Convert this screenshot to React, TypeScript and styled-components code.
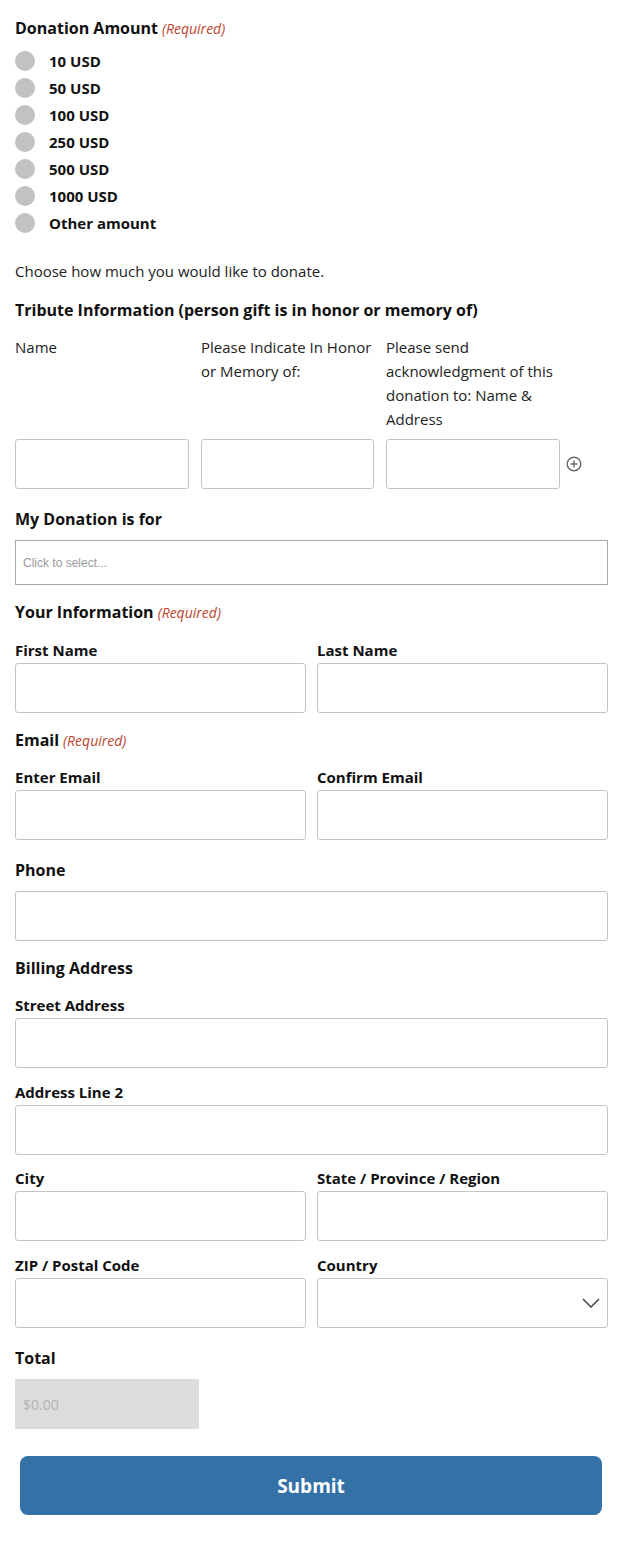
import React from "react";
import styled, { createGlobalStyle } from "styled-components";

const Global = createGlobalStyle`
  * { box-sizing: border-box; }
  body {
    margin: 0;
    background: #fff;
    font-family: "Open Sans", "Noto Sans", sans-serif;
    color: #111;
  }
`;

const Page = styled.form`
  display: flex;
  flex-direction: column;
  padding: 18px 16px 35px 15px;
  width: 624px;
`;

const Heading = styled.div<{ $mt?: number }>`
  margin-top: ${(p) => p.$mt ?? 0}px;
  font-size: 16px;
  font-weight: 700;
  line-height: 20px;
  color: #111;
`;

const Req = styled.span`
  font-size: 14px;
  font-weight: 400;
  font-style: italic;
  color: #b9452f;
  margin-left: 4px;
`;

const RadioList = styled.div`
  margin-top: 8.5px;
  display: flex;
  flex-direction: column;
`;

const RadioRow = styled.label`
  display: flex;
  align-items: center;
  height: 27px;
  gap: 14px;
  font-size: 15px;
  font-weight: 700;
  color: #111;
`;

const RadioDot = styled.span`
  width: 20px;
  height: 20px;
  border-radius: 50%;
  background: #c2c2c2;
  flex: none;
`;

const Help = styled.div<{ $mt?: number }>`
  margin-top: ${(p) => p.$mt ?? 0}px;
  font-size: 15px;
  line-height: 20px;
  color: #222;
`;

const TributeGrid = styled.div`
  margin-top: 15px;
  display: grid;
  grid-template-columns: 174px 173px 174px 1fr;
  column-gap: 12px;
  row-gap: 8px;
  align-items: start;
`;

const TributeLabel = styled.div`
  font-size: 15px;
  line-height: 24px;
  color: #222;
`;

const Input = styled.input`
  display: block;
  width: 100%;
  height: 50px;
  border: 1px solid #c4c4c4;
  border-radius: 3px;
  background: #fff;
  padding: 0 10px;
  font-family: "Open Sans", sans-serif;
  font-size: 14px;
  outline: none;
`;

const AddIcon = styled.div`
  height: 50px;
  display: flex;
  align-items: center;
  margin-left: -6px;
`;

const SelectBox = styled.div`
  margin-top: 11px;
  height: 45px;
  border: 1px solid #a9a9a9;
  display: flex;
  align-items: center;
  padding-left: 7px;
  font-family: "Liberation Sans", Arial, sans-serif;
  font-size: 12px;
  color: #9a9a9a;
`;

const Row = styled.div<{ $mt?: number }>`
  margin-top: ${(p) => p.$mt ?? 0}px;
  display: grid;
  grid-template-columns: 1fr 1fr;
  column-gap: 11px;
`;

const Field = styled.div<{ $mt?: number }>`
  margin-top: ${(p) => p.$mt ?? 0}px;
  display: flex;
  flex-direction: column;
  gap: 3px;
`;

const FieldLabel = styled.label`
  font-size: 15px;
  font-weight: 700;
  line-height: 20px;
  color: #111;
`;

const InputWrap = styled.div<{ $mt?: number }>`
  margin-top: ${(p) => p.$mt ?? 0}px;
  position: relative;
`;

const Chevron = styled.svg`
  position: absolute;
  right: 8px;
  top: 50%;
  transform: translateY(-50%);
`;

const TotalBox = styled.div`
  margin-top: 11px;
  width: 184px;
  height: 50px;
  background: #dcdcdc;
  display: flex;
  align-items: center;
  padding-left: 8px;
  font-size: 14px;
  color: #b3b3b3;
`;

const Submit = styled.button`
  margin: 27px 6px 0 5px;
  height: 59px;
  border: none;
  border-radius: 8px;
  background: #3371a6;
  color: #fff;
  font-family: "Open Sans", sans-serif;
  font-size: 19px;
  font-weight: 700;
  cursor: pointer;
`;

const amounts = ["10 USD", "50 USD", "100 USD", "250 USD", "500 USD", "1000 USD", "Other amount"];

function TwoFields({ a, b, mt, select }: { a: string; b: string; mt: number; select?: boolean }) {
  return (
    <Row $mt={mt}>
      <Field>
        <FieldLabel>{a}</FieldLabel>
        <Input />
      </Field>
      <Field>
        <FieldLabel>{b}</FieldLabel>
        <InputWrap>
          <Input />
          {select && (
            <Chevron width="18" height="10" viewBox="0 0 18 10">
              <path d="M1 1 L9 9 L17 1" fill="none" stroke="#444" strokeWidth="1.5" />
            </Chevron>
          )}
        </InputWrap>
      </Field>
    </Row>
  );
}

export default function App() {
  return (
    <>
      <Global />
      <Page onSubmit={(e) => e.preventDefault()}>
        <Heading>
          Donation Amount<Req>(Required)</Req>
        </Heading>
        <RadioList>
          {amounts.map((a) => (
            <RadioRow key={a}>
              <RadioDot />
              {a}
            </RadioRow>
          ))}
        </RadioList>
        <Help $mt={24.5}>Choose how much you would like to donate.</Help>

        <Heading $mt={19}>Tribute Information (person gift is in honor or memory of)</Heading>
        <TributeGrid>
          <TributeLabel>Name</TributeLabel>
          <TributeLabel>Please Indicate In Honor or Memory of:</TributeLabel>
          <TributeLabel>Please send acknowledgment of this donation to: Name &amp; Address</TributeLabel>
          <div />
          <Input />
          <Input />
          <Input />
          <AddIcon>
            <svg width="16" height="16" viewBox="0 0 16 16">
              <circle cx="8" cy="8" r="6.8" fill="none" stroke="#6a6a6a" strokeWidth="1.4" />
              <path d="M8 4.6 V11.4 M4.6 8 H11.4" stroke="#6a6a6a" strokeWidth="1.4" />
            </svg>
          </AddIcon>
        </TributeGrid>

        <Heading $mt={20}>My Donation is for</Heading>
        <SelectBox>Click to select...</SelectBox>

        <Heading $mt={17}>
          Your Information<Req>(Required)</Req>
        </Heading>
        <TwoFields a="First Name" b="Last Name" mt={17} />

        <Heading $mt={17}>
          Email<Req>(Required)</Req>
        </Heading>
        <TwoFields a="Enter Email" b="Confirm Email" mt={16} />

        <Heading $mt={20}>Phone</Heading>
        <InputWrap $mt={11}>
          <Input />
        </InputWrap>

        <Heading $mt={17}>Billing Address</Heading>
        <Field $mt={17}>
          <FieldLabel>Street Address</FieldLabel>
          <Input />
        </Field>
        <Field $mt={14}>
          <FieldLabel>Address Line 2</FieldLabel>
          <Input />
        </Field>
        <TwoFields a="City" b="State / Province / Region" mt={13} />
        <TwoFields a="ZIP / Postal Code" b="Country" mt={14} select />

        <Heading $mt={20}>Total</Heading>
        <TotalBox>$0.00</TotalBox>

        <Submit type="submit">Submit</Submit>
      </Page>
    </>
  );
}
